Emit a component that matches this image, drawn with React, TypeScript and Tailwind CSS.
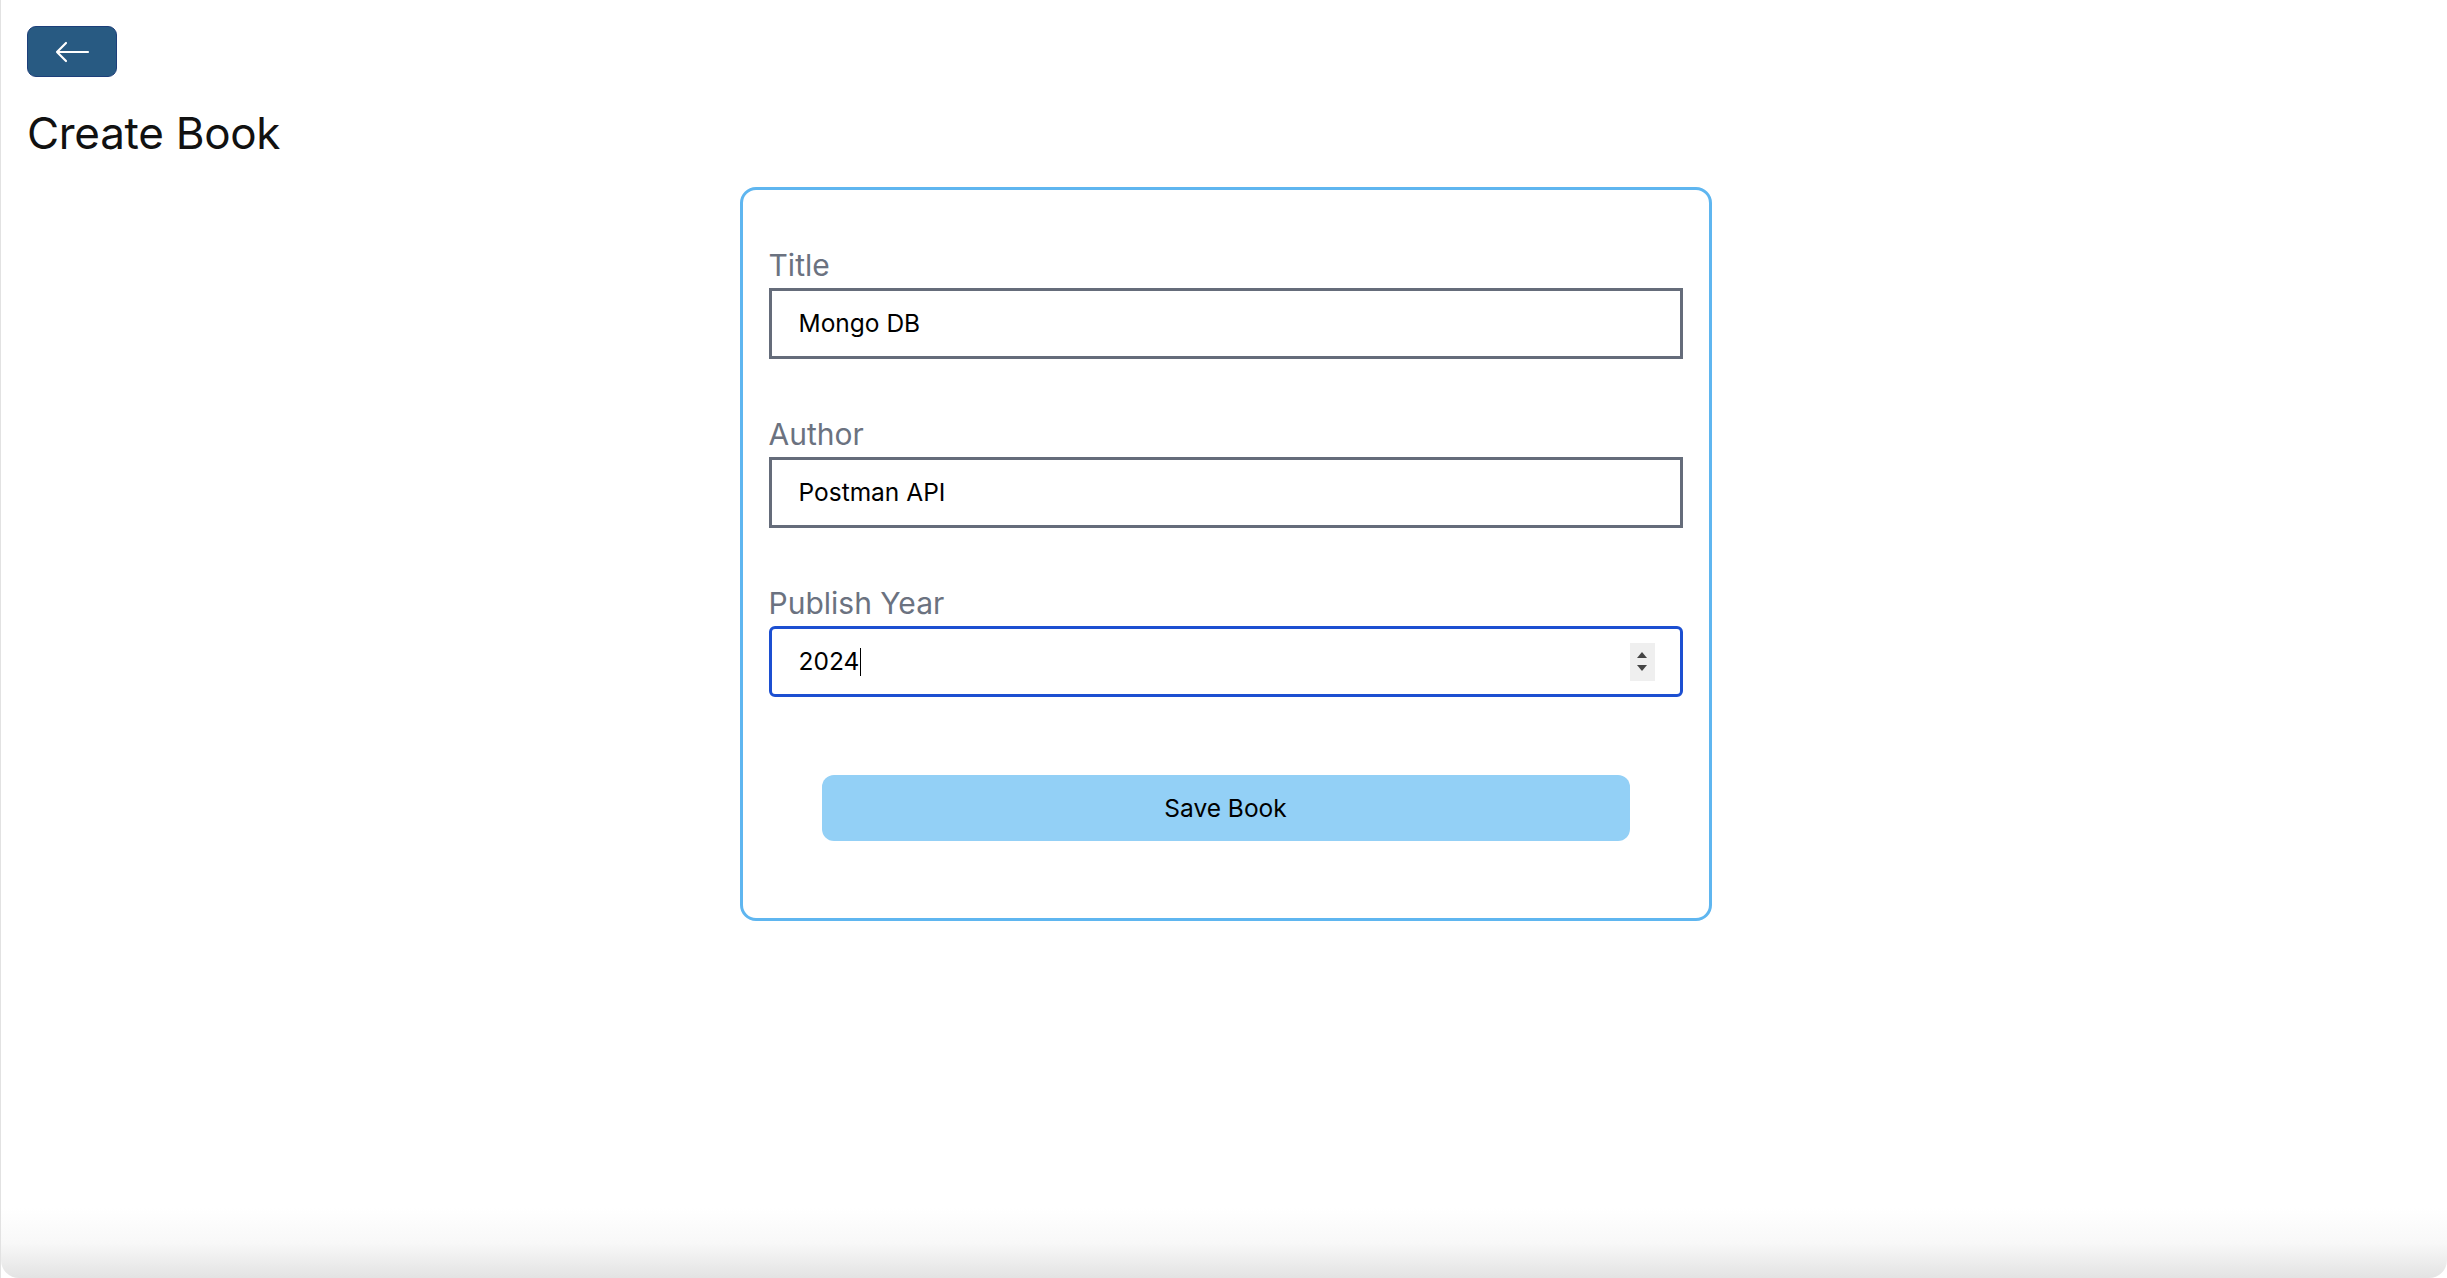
import React from "react";

export default function App() {
  const font = { fontFamily: "Inter, 'Noto Sans', sans-serif" };
  return (
    <div
      className="relative min-h-screen w-full overflow-hidden bg-white border-l border-[#e2e2e2]"
      style={font}
    >
      <div className="px-[26px] pt-[26px] flex flex-col items-start">
        <button className="w-[90px] h-[51px] rounded-[9px] bg-[#285a82] border border-[#1d3f7a] flex items-center justify-center">
          <svg width="36" height="24" viewBox="0 0 36 24" fill="none">
            <path
              d="M34 12H3M12 3L3 12L12 21"
              stroke="white"
              strokeWidth="2.2"
              strokeLinecap="round"
              strokeLinejoin="round"
            />
          </svg>
        </button>
        <h1 className="mt-[28px] text-[44px] leading-[56px] text-[#111] font-normal tracking-[-0.3px]">
          Create Book
        </h1>
      </div>

      <div className="flex justify-center mt-[26px] pl-[3px]">
        <div className="w-[972px] border-[3px] border-[#5fb6f0] rounded-[16px] px-[26px] pt-[53px] pb-[77px] flex flex-col">
          <div className="flex flex-col">
            <label className="text-[30px] leading-[44px] text-[#6b7280]">Title</label>
            <div className="mt-px h-[71px] border-[3px] border-[#656c7a] flex items-center pl-[27px] text-[24.5px] text-black">
              Mongo DB
            </div>
          </div>
          <div className="flex flex-col mt-[53px]">
            <label className="text-[30px] leading-[44px] text-[#6b7280]">Author</label>
            <div className="mt-px h-[71px] border-[3px] border-[#656c7a] flex items-center pl-[27px] text-[24.5px] text-black">
              Postman API
            </div>
          </div>
          <div className="flex flex-col mt-[53px]">
            <label className="text-[30px] leading-[44px] text-[#6b7280]">Publish Year</label>
            <div className="mt-px h-[71px] border-[3px] border-[#1c4fd1] rounded-[6px] flex items-center pl-[27px] pr-[25px] text-[24.5px] text-black">
              <span>2024</span>
              <span className="inline-block w-px h-[28px] bg-black ml-px" />
              <div className="ml-auto w-[25px] h-[38px] bg-[#efefef] flex flex-col items-center justify-center gap-[7px]">
                <svg width="10" height="6" viewBox="0 0 10 6">
                  <path d="M5 0L10 6H0Z" fill="#444" />
                </svg>
                <svg width="10" height="6" viewBox="0 0 10 6">
                  <path d="M0 0H10L5 6Z" fill="#444" />
                </svg>
              </div>
            </div>
          </div>
          <div className="px-[53px] mt-[78px]">
            <button className="w-full h-[66px] rounded-[12px] bg-[#93d0f6] text-[24.5px] text-black">
              Save Book
            </button>
          </div>
        </div>
      </div>

      <div className="pointer-events-none absolute left-0 right-0 bottom-0 h-[70px] rounded-b-[18px] bg-gradient-to-b from-transparent via-[#f8f8f8] to-[#e3e3e3]" />
    </div>
  );
}
